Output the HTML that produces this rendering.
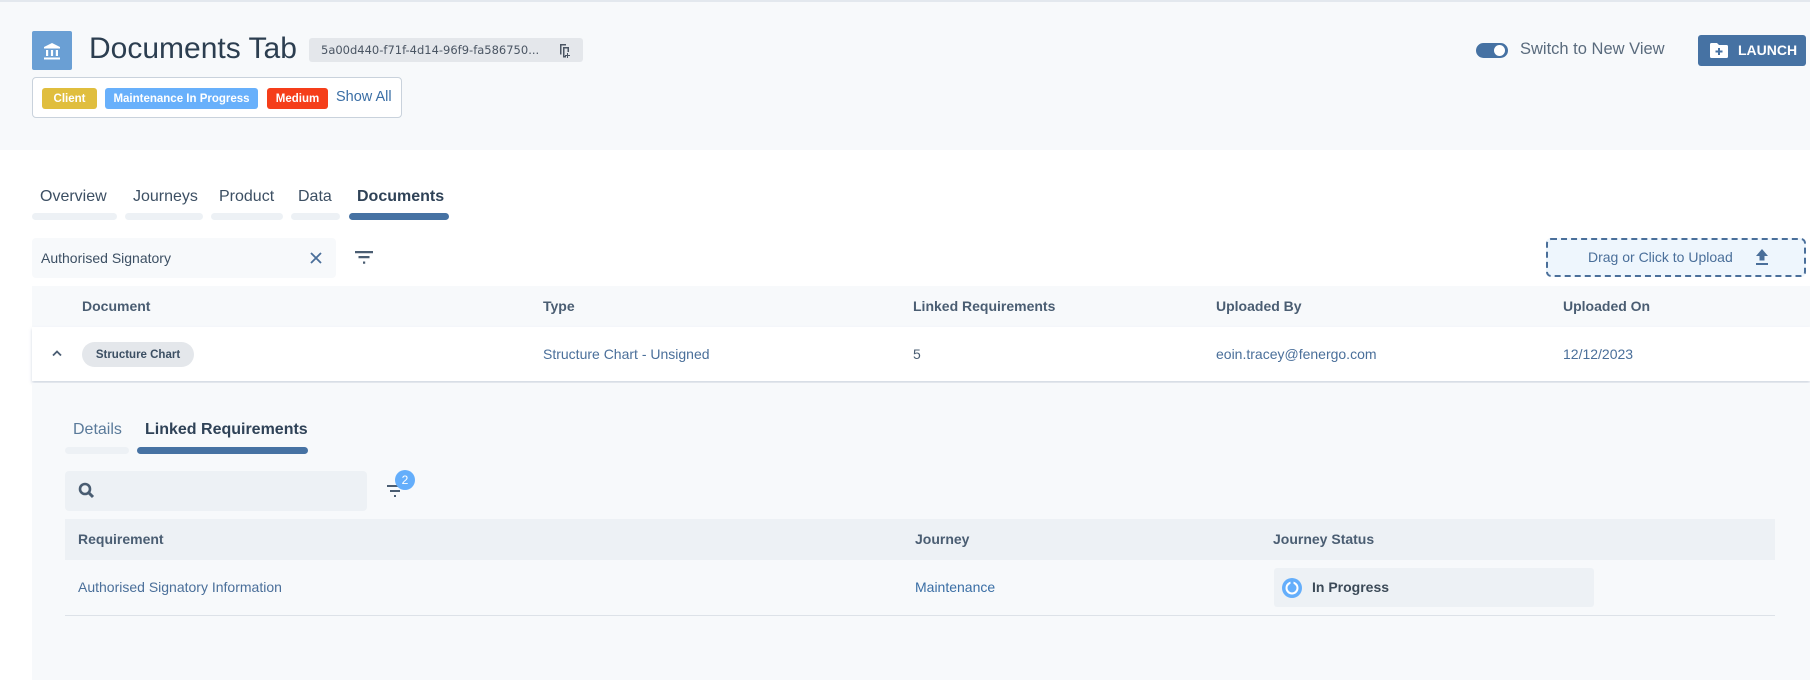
<!DOCTYPE html>
<html><head><meta charset="utf-8"><style>
*{margin:0;padding:0;box-sizing:border-box}
body{width:1810px;height:680px;overflow:hidden;background:#fff;font-family:"Liberation Sans",sans-serif;color:#34495e;position:relative}
.a{position:absolute}
.hdr{left:0;top:0;width:1810px;height:150px;background:#f7f9fb;border-top:2px solid #e3e8ee}
.tag{position:absolute;top:88px;height:21px;border-radius:3px;color:#fff;font-weight:bold;font-size:11.5px;line-height:22px;text-align:center}
.tab{position:absolute;top:188px;font-size:16px;color:#3c4f63}
.ul{position:absolute;top:213px;height:7px;border-radius:4px;background:#edf1f5}
.th{position:absolute;font-size:14px;font-weight:bold;color:#4a5d72}
.td{position:absolute;font-size:14px;color:#4a6f9a}
</style></head><body>
<div class="a hdr"></div>
<div class="a" style="left:32px;top:31px;width:40px;height:39px;background:#6a9fd4;border-radius:2px"></div>
<svg class="a" style="left:40px;top:39px" width="24" height="24" viewBox="0 0 24 24"><path d="M12 4 L20 8 V9.5 H4 V8 Z M6 11h2.2v6H6z M10.9 11h2.2v6h-2.2z M15.8 11H18v6h-2.2z M4 18.5h16v2H4z" fill="#fff"/></svg>
<div class="a" style="left:89px;top:32px;font-size:30px;color:#2c3e50">Documents Tab</div>
<div class="a" style="left:309px;top:38px;width:274px;height:24px;background:#e4e7eb;border-radius:3px;font-family:'DejaVu Sans',sans-serif;font-size:11.5px;color:#4a5563;line-height:24px;padding-left:12px">5a00d440-f71f-4d14-96f9-fa586750...</div>
<svg class="a" style="left:557px;top:43px" width="14" height="15" viewBox="0 0 14 15"><path d="M3 1h6v1.5H4.5v9H3z M6 4h6v5h-1.5V5.5h-3v7.5H9v1.5H6z M11 10v2h2v1h-2v2h-1v-2H8v-1h2v-2z" fill="#4a5563"/></svg>
<div class="a" style="left:32px;top:77px;width:370px;height:41px;border:1px solid #c9d2dc;border-radius:4px;background:#fff"></div>
<div class="tag" style="left:42px;width:55px;background:#e0be3e">Client</div>
<div class="tag" style="left:105px;width:153px;background:#68b0fb">Maintenance In Progress</div>
<div class="tag" style="left:267px;width:61px;background:#f53e1a">Medium</div>
<div class="a" style="left:336px;top:89px;font-size:14.5px;color:#3a6ea5">Show All</div>
<div class="a" style="left:1476px;top:43px;width:32px;height:15px;border-radius:8px;background:#4672a3"></div>
<div class="a" style="left:1494px;top:45px;width:11px;height:11px;border-radius:50%;background:#fff"></div>
<div class="a" style="left:1520px;top:40px;font-size:16.5px;color:#5a6b7d">Switch to New View</div>
<div class="a" style="left:1698px;top:35px;width:108px;height:31px;background:#4672a3;border-radius:3px;color:#fff;font-size:14px;font-weight:bold;line-height:31px;padding-left:40px">LAUNCH</div>
<svg class="a" style="left:1710px;top:43px" width="18" height="15" viewBox="0 0 18 15"><path d="M0 1.5Q0 0 1.5 0H7l2 2h7.5Q18 2 18 3.5v10Q18 15 16.5 15h-15Q0 15 0 13.5z" fill="#fff"/><path d="M8 5h2v2.5h2.5v2H10V12H8V9.5H5.5v-2H8z" fill="#4672a3"/></svg>

<div class="tab" style="left:40px">Overview</div>
<div class="tab" style="left:133px">Journeys</div>
<div class="tab" style="left:219px">Product</div>
<div class="tab" style="left:298px">Data</div>
<div class="tab" style="left:357px;font-weight:bold;color:#2f4257">Documents</div>
<div class="ul" style="left:32px;width:85px"></div>
<div class="ul" style="left:125px;width:78px"></div>
<div class="ul" style="left:211px;width:72px"></div>
<div class="ul" style="left:291px;width:49px"></div>
<div class="ul" style="left:349px;width:100px;background:#4672a3"></div>

<div class="a" style="left:32px;top:238px;width:304px;height:40px;background:#f7f9fb;border-radius:4px;font-size:14px;line-height:40px;padding-left:9px;color:#3c4f63">Authorised Signatory</div>
<svg class="a" style="left:309px;top:251px" width="14" height="14" viewBox="0 0 14 14"><path d="M2 2L12 12M12 2L2 12" stroke="#4a6f9a" stroke-width="1.8"/></svg>
<svg class="a" style="left:354px;top:250px" width="20" height="16" viewBox="0 0 20 16"><path d="M1 1h18v2.2H1zM4.5 6h11v2.2h-11zM9 11.5h2.2v2.2H9z" fill="#4a5d72"/></svg>
<div class="a" style="left:1546px;top:238px;width:260px;height:39px;border:2px dashed #4a6f9a;border-radius:5px;background:#eef6fd;font-size:14px;line-height:35px;padding-left:40px;color:#4a6f9a">Drag or Click to Upload</div>
<svg class="a" style="left:1754px;top:248px" width="16" height="18" viewBox="0 0 16 18"><path d="M8 1L14 8H10.5V12.5h-5V8H2z M2 15h12v2H2z" fill="#4a6f9a"/></svg>

<div class="a" style="left:32px;top:286px;width:1778px;height:41px;background:#f7f9fb"></div>
<div class="th" style="left:82px;top:298px">Document</div>
<div class="th" style="left:543px;top:298px">Type</div>
<div class="th" style="left:913px;top:298px">Linked Requirements</div>
<div class="th" style="left:1216px;top:298px">Uploaded By</div>
<div class="th" style="left:1563px;top:298px">Uploaded On</div>
<div class="a" style="left:32px;top:327px;width:1778px;height:54px;background:#fff;box-shadow:0 2px 3px rgba(120,140,170,.35)"></div>
<svg class="a" style="left:51px;top:349px" width="12" height="8" viewBox="0 0 12 8"><path d="M2 6.5L6 2.5L10 6.5" stroke="#4a5d72" stroke-width="1.8" fill="none"/></svg>
<div class="a" style="left:82px;top:342px;width:112px;height:25px;background:#e4e7eb;border-radius:13px;font-size:11.5px;font-weight:bold;color:#3c4f63;line-height:26px;text-align:center">Structure Chart</div>
<div class="td" style="left:543px;top:346px">Structure Chart - Unsigned</div>
<div class="td" style="left:913px;top:346px;color:#4a5d72">5</div>
<div class="td" style="left:1216px;top:346px">eoin.tracey@fenergo.com</div>
<div class="td" style="left:1563px;top:346px">12/12/2023</div>

<div class="a" style="left:32px;top:383px;width:1778px;height:297px;background:#f7f9fb"></div>
<div class="a" style="left:73px;top:421px;font-size:16px;color:#5a7a9a">Details</div>
<div class="a" style="left:145px;top:421px;font-size:16px;font-weight:bold;color:#2f4257">Linked Requirements</div>
<div class="a" style="left:65px;top:447px;width:64px;height:7px;border-radius:4px;background:#edf1f5"></div>
<div class="a" style="left:137px;top:447px;width:171px;height:7px;border-radius:4px;background:#4672a3"></div>
<div class="a" style="left:65px;top:471px;width:302px;height:40px;background:#edf1f5;border-radius:4px"></div>
<svg class="a" style="left:78px;top:482px" width="17" height="17" viewBox="0 0 17 17"><circle cx="7" cy="7" r="5" stroke="#4a5d72" stroke-width="2.6" fill="none"/><path d="M10.5 10.5L15 15" stroke="#4a5d72" stroke-width="3"/></svg>
<svg class="a" style="left:386px;top:484px" width="20" height="16" viewBox="0 0 20 16"><path d="M1 1h16v2H1zM4 6h10v2H4zM8 11h2v2H8z" fill="#4a5d72"/></svg>
<div class="a" style="left:395px;top:470px;width:20px;height:20px;border-radius:50%;background:#64aefb;color:#fff;font-size:12px;line-height:20px;text-align:center">2</div>

<div class="a" style="left:65px;top:519px;width:1710px;height:41px;background:#edf1f5"></div>
<div class="th" style="left:78px;top:531px">Requirement</div>
<div class="th" style="left:915px;top:531px">Journey</div>
<div class="th" style="left:1273px;top:531px">Journey Status</div>
<div class="a" style="left:65px;top:615px;width:1710px;height:1px;background:#dde2e8"></div>
<div class="td" style="left:78px;top:579px">Authorised Signatory Information</div>
<div class="td" style="left:915px;top:579px;color:#3a6ea5">Maintenance</div>
<div class="a" style="left:1274px;top:568px;width:320px;height:39px;background:#edf1f5;border-radius:3px"></div>
<svg class="a" style="left:1281px;top:577px" width="22" height="22" viewBox="0 0 22 22"><circle cx="11" cy="11" r="10" fill="#64aefb"/><circle cx="11" cy="11" r="5.5" stroke="#fff" stroke-width="2" fill="none"/><path d="M11 3v5" stroke="#64aefb" stroke-width="3"/></svg>
<div class="a" style="left:1312px;top:579px;font-size:14px;font-weight:bold;color:#3c4a58">In Progress</div>
</body></html>
